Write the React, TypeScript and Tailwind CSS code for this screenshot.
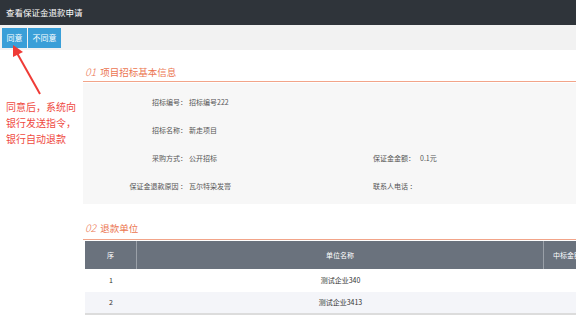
import React from "react";

const font = { fontFamily: '"Noto Sans CJK SC", "Noto Sans", sans-serif' };

function InfoRow({ label, value, label2, value2 }: { label: string; value: string; label2?: string; value2?: string }) {
  return (
    <div className="flex h-[28px] items-center text-[7px] text-[#555]">
      <div className="w-[104px] text-right">{label}</div>
      <div className="ml-[2px] w-[184px]">{value}</div>
      {label2 !== undefined && (
        <>
          <div className="w-[47px]">{label2}</div>
          <div>{value2}</div>
        </>
      )}
    </div>
  );
}

function SectionTitle({ num, text, top }: { num: string; text: string; top: string }) {
  return (
    <div className={`${top} flex items-center border-b border-[#f2a489] leading-[16px] text-[#eb7550]`}>
      <span className="pl-[2px] text-[10.5px] italic font-light">{num}</span>
      <span className="ml-[4px] text-[9.5px]">{text}</span>
    </div>
  );
}

export default function App() {
  return (
    <div className="relative h-[315px] w-[576px] overflow-hidden bg-white" style={font}>
      <div className="flex h-[25px] items-center bg-[#2f343a] pl-[6px] text-[8.5px] text-white">
        查看保证金退款申请
      </div>
      <div className="flex h-[25px] items-center gap-[1px] bg-[#f2f2f2] pl-[2px]">
        <button className="h-[20px] bg-[#3a9fd8] px-[4.5px] text-[8px] text-white">同意</button>
        <button className="h-[20px] bg-[#3a9fd8] px-[4.5px] text-[8px] text-white">不同意</button>
      </div>
      <div className="flex">
        <div className="w-[83px] shrink-0 pl-[6px] pt-[49px] text-[10px] leading-[16px] text-[#ef4a3f]">
          <div>同意后，系统向</div>
          <div>银行发送指令，</div>
          <div>银行自动退款</div>
        </div>
        <div className="w-[600px] shrink-0">
          <SectionTitle num="01" text="项目招标基本信息" top="pt-[14px] pb-[1px]" />
          <div className="mt-[1px] bg-[#f7f7f7] pt-[5px] pb-[4px]">
            <InfoRow label="招标编号：" value="招标编号222" />
            <InfoRow label="招标名称：" value="新走项目" />
            <InfoRow label="采购方式：" value="公开招标" label2="保证金金额：" value2="0.1元" />
            <InfoRow label="保证金退款原因 ：" value="瓦尔特染发膏" label2="联系人电话 ：" value2="" />
          </div>
          <SectionTitle num="02" text="退款单位" top="pt-[16px] pb-[3px]" />
          <div className="ml-[2px] mt-[1px] border-b-2 border-[#dcdcdc] text-[7px]">
            <div className="flex h-[28px] items-center bg-[#6a727d] text-white">
              <div className="flex h-full w-[52px] items-center justify-center border-r border-[#9aa0a8]">序</div>
              <div className="flex h-full w-[407px] items-center justify-center border-r border-[#9aa0a8]">单位名称</div>
              <div className="flex h-full w-[46px] items-center justify-center whitespace-nowrap">中标金额</div>
            </div>
            <div className="flex h-[23px] items-center bg-white text-[#333]">
              <div className="w-[52px] text-center">1</div>
              <div className="w-[407px] text-center">测试企业340</div>
              <div className="w-[46px]"></div>
            </div>
            <div className="flex h-[21px] items-center bg-[#f4f5f9] text-[#333]">
              <div className="w-[52px] text-center">2</div>
              <div className="w-[407px] text-center">测试企业3413</div>
              <div className="w-[46px]"></div>
            </div>
          </div>
        </div>
      </div>
      <svg className="pointer-events-none absolute left-0 top-0" width="60" height="100" viewBox="0 0 60 100">
        <line x1="40" y1="94" x2="17" y2="53" stroke="#ef3b36" strokeWidth="2" />
        <polygon points="13,45 23,52 13,57" fill="#ef3b36" />
      </svg>
    </div>
  );
}
